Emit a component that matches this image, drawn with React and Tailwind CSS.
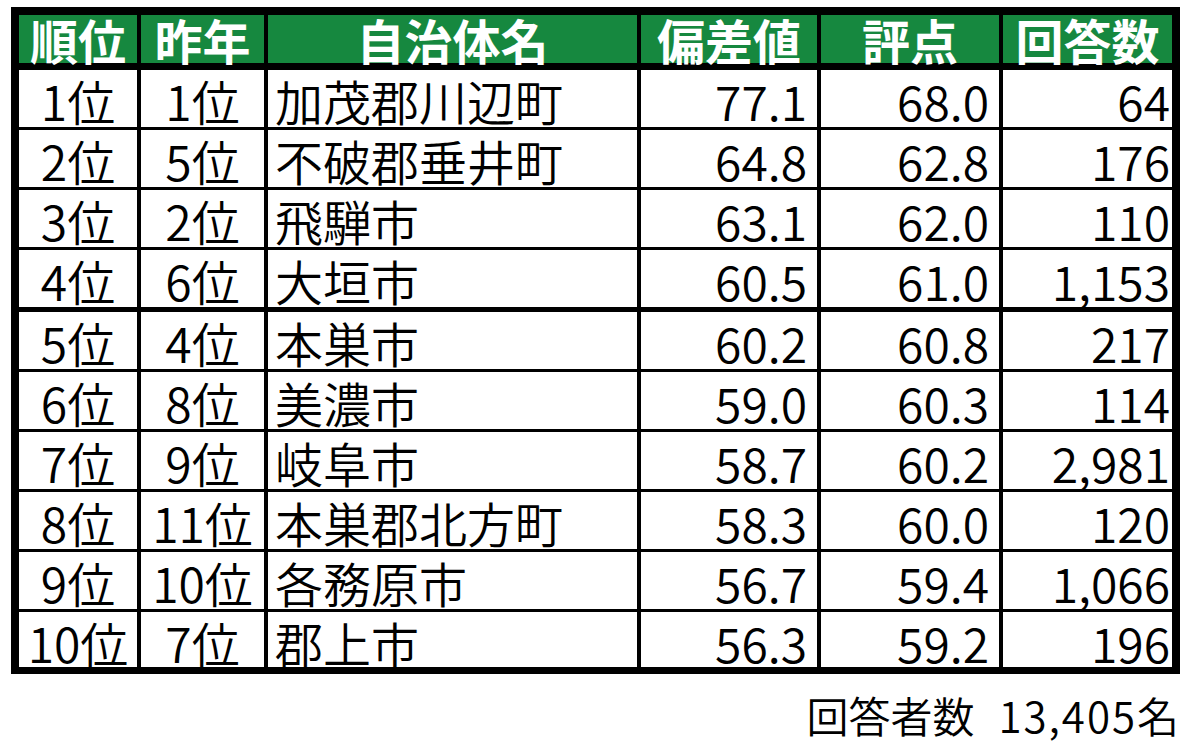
const rows = [
  ["1位", "1位", "加茂郡川辺町", "77.1", "68.0", "64"],
  ["2位", "5位", "不破郡垂井町", "64.8", "62.8", "176"],
  ["3位", "2位", "飛騨市", "63.1", "62.0", "110"],
  ["4位", "6位", "大垣市", "60.5", "61.0", "1,153"],
  ["5位", "4位", "本巣市", "60.2", "60.8", "217"],
  ["6位", "8位", "美濃市", "59.0", "60.3", "114"],
  ["7位", "9位", "岐阜市", "58.7", "60.2", "2,981"],
  ["8位", "11位", "本巣郡北方町", "58.3", "60.0", "120"],
  ["9位", "10位", "各務原市", "56.7", "59.4", "1,066"],
  ["10位", "7位", "郡上市", "56.3", "59.2", "196"],
];

const headers = ["順位", "昨年", "自治体名", "偏差値", "評点", "回答数"];

// cell alignment per column
const cellAlign = [
  "justify-center",
  "justify-center",
  "justify-start pl-[7px]",
  "justify-end pr-[10px]",
  "justify-end pr-[10px]",
  "justify-end pr-[2px]",
];

const gridCols = "grid grid-cols-[118px_123px_369px_176px_178px_169px] gap-x-[4px]";

export default function App() {
  return (
    <div className="w-[1200px] h-[755px] bg-white text-black font-['Noto_Sans_CJK_JP','Noto_Sans',sans-serif] overflow-hidden">
      <div className="pt-[7px] pl-[11px]">
        <div className="w-[1169px] border-[8px] border-b-[7px] border-black bg-black flex flex-col">
          <div className={`${gridCols} h-[48px]`}>
            {headers.map((h) => (
              <div
                key={h}
                className="bg-[#16883f] text-white font-bold text-[48px] leading-[48px] flex justify-center items-start"
              >
                {h}
              </div>
            ))}
          </div>
          {rows.map((row, i) => (
            <div
              key={i}
              className={`${gridCols} ${i === 9 ? "h-[55px]" : "h-[57px]"} ${
                i === 0 ? "mt-[7px]" : i === 4 ? "mt-[5px]" : "mt-[3px]"
              }`}
            >
              {row.map((cell, j) => (
                <div
                  key={j}
                  className={`bg-white font-[350] text-[48px] leading-[48px] pt-[6px] flex items-start whitespace-nowrap ${cellAlign[j]}`}
                >
                  {cell}
                </div>
              ))}
            </div>
          ))}
        </div>
      </div>
      <div className="flex justify-end pr-[19px] pt-[17px] text-[42px] leading-[48px] font-[350]">
        <span>回答者数</span>
        <span className="ml-[24px] tracking-[2px]">13,405名</span>
      </div>
    </div>
  );
}
